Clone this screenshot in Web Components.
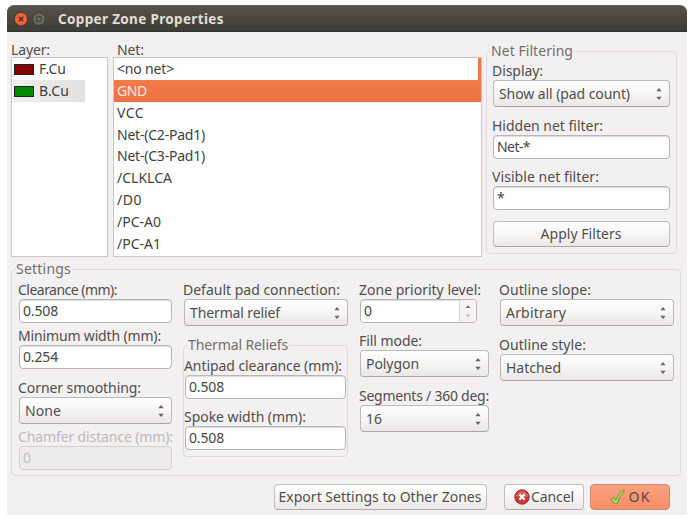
<!DOCTYPE html>
<html lang="en">
<head>
<meta charset="utf-8">
<title>Copper Zone Properties</title>
<style>
    body {
        margin: 0;
        padding: 5px 8px 3px 7px;
        background: #fff;
        font: 14px/18px "Noto Sans", "Open Sans", sans-serif;
        color: #4f4e4c;
    }
    .top { display: flex; height: 222px; padding-left: 4px; }
    .layers { width: 97px; margin-right: 5px; }
    .nets { width: 369px; margin-right: 4px; }
    .filters { width: 191px; margin-top: 10px; }
    .caption { height: 17px; padding: 0 1px; }
    .nets .caption { padding-left: 5px; }
    .settings { margin: 6px 6px 0 4px; }
    .cols { display: flex; }
    .cols > div { display: flex; flex-direction: column; }
    .buttons { display: flex; justify-content: flex-end; margin: 8px 17px 0 0; }
</style>
</head>
<body>
<zone-window>
    <fit-text slot="title" w="163">Copper Zone Properties</fit-text>

    <div class="top">
        <div class="layers">
            <div class="caption"><fit-text w="38">Layer:</fit-text></div>
            <list-box>
                <layer-row color="#870000"><fit-text w="26">F.Cu</fit-text></layer-row>
                <layer-row color="#008a00" selected><fit-text w="29">B.Cu</fit-text></layer-row>
            </list-box>
        </div>
        <div class="nets">
            <div class="caption"><fit-text w="26">Net:</fit-text></div>
            <list-box>
                <net-row focus><fit-text w="56">&lt;no net&gt;</fit-text></net-row>
                <net-row selected><fit-text w="29">GND</fit-text></net-row>
                <net-row><fit-text w="26">VCC</fit-text></net-row>
                <net-row><fit-text w="87">Net-(C2-Pad1)</fit-text></net-row>
                <net-row><fit-text w="87">Net-(C3-Pad1)</fit-text></net-row>
                <net-row><fit-text w="54">/CLKLCA</fit-text></net-row>
                <net-row><fit-text w="24">/D0</fit-text></net-row>
                <net-row><fit-text w="43">/PC-A0</fit-text></net-row>
                <net-row><fit-text w="43">/PC-A1</fit-text></net-row>
            </list-box>
        </div>
        <group-box class="filters" style="height:203px; --pad:10px 6px 0 6px">
            <fit-text slot="legend" w="81">Net Filtering</fit-text>
            <form-field label="Display:" w="50"><drop-down><fit-text w="130">Show all (pad count)</fit-text></drop-down></form-field>
            <form-field label="Hidden net filter:" w="110" style="margin-top:10px"><text-box><fit-text w="32">Net-*</fit-text></text-box></form-field>
            <form-field label="Visible net filter:" w="106" style="margin-top:9px"><text-box><fit-text>*</fit-text></text-box></form-field>
            <push-button style="margin-top:11px; height:26px"><fit-text w="80">Apply Filters</fit-text></push-button>
        </group-box>
    </div>

    <group-box class="settings" style="height:207px; --pad:11px 6px 0 7px">
        <fit-text slot="legend" w="54">Settings</fit-text>
        <div class="cols">
            <div style="width:153px; margin-right:12px">
                <form-field label="Clearance (mm):" w="98"><text-box><fit-text w="34">0.508</fit-text></text-box></form-field>
                <form-field label="Minimum width (mm):" w="142" style="margin-top:4px"><text-box><fit-text w="34">0.254</fit-text></text-box></form-field>
                <form-field label="Corner smoothing:" w="122" style="margin-top:10px"><drop-down><fit-text w="35">None</fit-text></drop-down></form-field>
                <form-field label="Chamfer distance (mm):" w="154" style="margin-top:4px" disabled><text-box disabled><fit-text>0</fit-text></text-box></form-field>
            </div>
            <div style="width:164px; margin-right:12px">
                <form-field label="Default pad connection:" w="156"><drop-down><fit-text w="89">Thermal relief</fit-text></drop-down></form-field>
                <group-box style="height:112px; margin:19px 0 0 -1px; --pad:11px 1px 0 1px">
                    <fit-text slot="legend" w="99">Thermal Reliefs</fit-text>
                    <form-field label="Antipad clearance (mm):" w="157"><text-box><fit-text w="34">0.508</fit-text></text-box></form-field>
                    <form-field label="Spoke width (mm):" w="121" style="margin-top:9px"><text-box><fit-text w="34">0.508</fit-text></text-box></form-field>
                </group-box>
            </div>
            <div style="width:129px; margin-right:11px">
                <form-field label="Zone priority level:" w="121"><text-box spin style="width:117px"><fit-text>0</fit-text></text-box></form-field>
                <form-field label="Fill mode:" w="62" style="margin-top:9px"><drop-down><fit-text w="52">Polygon</fit-text></drop-down></form-field>
                <form-field label="Segments / 360 deg:" w="129" style="margin-top:10px"><drop-down><fit-text w="15">16</fit-text></drop-down></form-field>
            </div>
            <div style="width:174px">
                <form-field label="Outline slope:" w="91"><drop-down><fit-text w="59">Arbitrary</fit-text></drop-down></form-field>
                <form-field label="Outline style:" w="86" style="margin-top:10px"><drop-down><fit-text w="54">Hatched</fit-text></drop-down></form-field>
            </div>
        </div>
    </group-box>

    <div class="buttons">
        <push-button style="width:213px; margin-right:17px"><fit-text w="202">Export Settings to Other Zones</fit-text></push-button>
        <push-button style="width:80px; margin-right:6px" icon="cancel"><fit-text w="42">Cancel</fit-text></push-button>
        <push-button style="width:80px" icon="ok" primary><fit-text w="21">OK</fit-text></push-button>
    </div>
</zone-window>

<script>
class BaseElement extends HTMLElement {
    constructor() {
        super();
        this.attachShadow({ mode: "open" });
    }

    connectedCallback() {
        this.shadowRoot.innerHTML = `<style>:host { display: block; box-sizing: border-box; } ${this.styles()}</style>${this.markup()}`;
    }

    styles() { return ""; }

    markup() { return "<slot></slot>"; }
}

// Single line of text, tracked so that it takes the width given in "w"
class FitText extends BaseElement {
    connectedCallback() {
        super.connectedCallback();
        const span = this.shadowRoot.querySelector("span");
        const width = parseFloat(this.getAttribute("w"));
        const natural = span.getBoundingClientRect().width;
        const count = this.textContent.length;
        if (width && natural) span.style.letterSpacing = `${(width + 1 - natural) / count}px`;
    }

    styles() {
        return `:host { display: inline-block; white-space: nowrap; margin-left: -1px; } span { display: inline-block; }`;
    }

    markup() { return "<span><slot></slot></span>"; }
}

class ZoneWindow extends BaseElement {
    styles() {
        return `
            :host { height: 510px; background: #f2f0f0; border-radius: 7px 7px 0 0; }
            header {
                display: flex; align-items: center; box-sizing: border-box;
                height: 27px; padding: 0 0 0 7px;
                border-radius: 7px 7px 0 0;
                background: linear-gradient(#55534a, #3d3c37);
                border-top: 1px solid #65645c; border-bottom: 1px solid #34332f;
                color: #e3dfd5; font-weight: bold; font-size: 13.5px;
            }
            svg { margin-right: 4px; }
            .title { margin-left: 9px; }
            main { padding-top: 9px; }
        `;
    }

    markup() {
        return `
            <header>
                <svg width="14" height="14" viewBox="0 0 14 14">
                    <circle cx="7" cy="7" r="6.6" fill="#ef6338" stroke="#37352f" stroke-width=".8"/>
                    <path d="M4.8 4.8l4.4 4.4M9.2 4.8l-4.4 4.4" stroke="#642b18" stroke-width="1.5"/>
                </svg>
                <svg width="14" height="14" viewBox="0 0 14 14">
                    <circle cx="7" cy="7" r="6.3" fill="#6a6962" stroke="#383732" stroke-width=".8"/>
                    <rect x="4.8" y="4.8" width="4.4" height="4.4" fill="none" stroke="#464540" stroke-width="1.2"/>
                </svg>
                <div class="title"><slot name="title"></slot></div>
            </header>
            <main><slot></slot></main>
        `;
    }
}

class ListBox extends BaseElement {
    styles() {
        return `:host { height: 200px; margin-top: -1px; padding: 0 1px; background: #fff; border: 1px solid #c9c5c3; overflow: hidden; color: #3f3f3f; }`;
    }
}

class LayerRow extends BaseElement {
    styles() {
        return `
            :host { display: flex; align-items: center; height: 22px; width: 72px; padding-left: 1px; }
            :host([selected]) { background: linear-gradient(90deg, #efefee, #e2e1df); }
            i { width: 18px; height: 9px; border: 1px solid #222; background: ${this.getAttribute("color")}; margin-right: 6px; }
        `;
    }

    markup() { return "<i></i><slot></slot>"; }
}

class NetRow extends BaseElement {
    styles() {
        return `
            :host { height: 21.85px; padding: 2px 0 0 4px; margin: 0 -1px; }
            :host([focus]) { border-right: 3px solid #f07746; }
            :host([selected]) { background: linear-gradient(#f37b4a, #ee7040); color: #ffeee3; }
        `;
    }
}

class GroupBox extends BaseElement {
    styles() {
        return `
            :host { border: 1px solid #dedbd9; border-radius: 4px; padding: var(--pad); }
            .legend { width: fit-content; height: 18px; padding: 0 1px; background: #f2f0f0; color: #706e6c; }
        `;
    }

    connectedCallback() {
        super.connectedCallback();
        // The caption sits on the border, whatever the inner padding is
        const box = getComputedStyle(this);
        const legend = this.shadowRoot.querySelector(".legend");
        const top = parseFloat(box.paddingTop) + 10;
        legend.style.marginTop = `${-top}px`;
        legend.style.marginBottom = `${top - 18}px`;
        legend.style.marginLeft = `${4 - parseFloat(box.paddingLeft)}px`;
    }

    markup() { return `<div class="legend"><slot name="legend"></slot></div><slot></slot>`; }
}

class FormField extends BaseElement {
    styles() {
        return `
            label { display: block; height: 18px; white-space: nowrap; }
            :host([disabled]) label { color: #bcb9b7; }
        `;
    }

    markup() {
        return `<label><fit-text w="${this.getAttribute("w")}">${this.getAttribute("label")}</fit-text></label><slot></slot>`;
    }
}

class TextBox extends BaseElement {
    styles() {
        return `
            :host {
                display: flex; height: 24px; padding-left: 4px; line-height: 21px;
                background: #fff; border: 1px solid #b9b5b2; border-radius: 4px;
                box-shadow: inset 0 1px 1px #dedbd9; color: #454545;
            }
            :host([disabled]) { background: #eeeceb; border-color: #d2cfcd; box-shadow: none; color: #c1bebc; }
            .value { flex: 1; }
            svg { width: 16px; height: 22px; background: #f4f3f2; border-left: 1px solid #dcd9d7; border-radius: 0 3px 3px 0; }
        `;
    }

    markup() {
        const spin = `<svg viewBox="0 0 16 22"><path d="M5.5 8L8 5l2.5 3z" fill="#777"/><path d="M5.5 14.5L8 17.5l2.5-3z" fill="#bbb"/></svg>`;
        return `<div class="value"><slot></slot></div>${this.hasAttribute("spin") ? spin : ""}`;
    }
}

class DropDown extends BaseElement {
    styles() {
        return `
            :host {
                display: flex; justify-content: space-between; align-items: center;
                height: 27px; padding: 0 7px 0 6px;
                background: linear-gradient(#fff, #f6f5f4 50%, #e9e8e7);
                border: 1px solid #bdb9b6; border-bottom-color: #aaa7a4; border-radius: 4px;
            }
        `;
    }

    markup() {
        return `<slot></slot><svg width="6" height="13" viewBox="0 0 6 13"><path d="M.3 4.2L3 1l2.7 3.2zM.3 9.8L3 13l2.7-3.2z" fill="#686664"/></svg>`;
    }
}

class PushButton extends BaseElement {
    styles() {
        return `
            :host {
                display: flex; justify-content: center; align-items: center;
                height: 26px;
                background: linear-gradient(#fff, #f7f6f5 50%, #ebe9e8);
                border: 1px solid #c1bdba; border-bottom-color: #aaa7a4; border-radius: 4px;
            }
            :host([primary]) { background: linear-gradient(#f7a27f, #fb9772 50%, #f58e67); border-color: #cb8a6d; }
            svg { margin-right: 2px; }
            :host([primary]) svg { margin-right: 4px; }
        `;
    }

    icon() {
        switch (this.getAttribute("icon")) {
            case "cancel":
                return `<svg width="16" height="16" viewBox="0 0 16 16">
                    <circle cx="8" cy="8" r="7.2" fill="#cf3535" stroke="#ac2828"/>
                    <path d="M2 8a6 6 0 0 1 12 0q-6-2-12 0z" fill="#e57c73" opacity=".6"/>
                    <path d="M5.4 5.4l5.2 5.2M10.6 5.4l-5.2 5.2" stroke="#fff" stroke-width="2.2"/>
                </svg>`;
            case "ok":
                return `<svg width="16" height="16" viewBox="0 0 16 16">
                    <path d="M1.3 9.6l2.5-1.4 2.1 3.1Q8.7 3.7 13 .8l1.5.9Q10 6.5 7 15H5.2z" fill="#a4df5b" stroke="#679934" stroke-linejoin="round"/>
                </svg>`;
            default:
                return "";
        }
    }

    markup() { return `${this.icon()}<slot></slot>`; }
}

customElements.define("fit-text", FitText);
customElements.define("zone-window", ZoneWindow);
customElements.define("list-box", ListBox);
customElements.define("layer-row", LayerRow);
customElements.define("net-row", NetRow);
customElements.define("group-box", GroupBox);
customElements.define("form-field", FormField);
customElements.define("text-box", TextBox);
customElements.define("drop-down", DropDown);
customElements.define("push-button", PushButton);
</script>
</body>
</html>
